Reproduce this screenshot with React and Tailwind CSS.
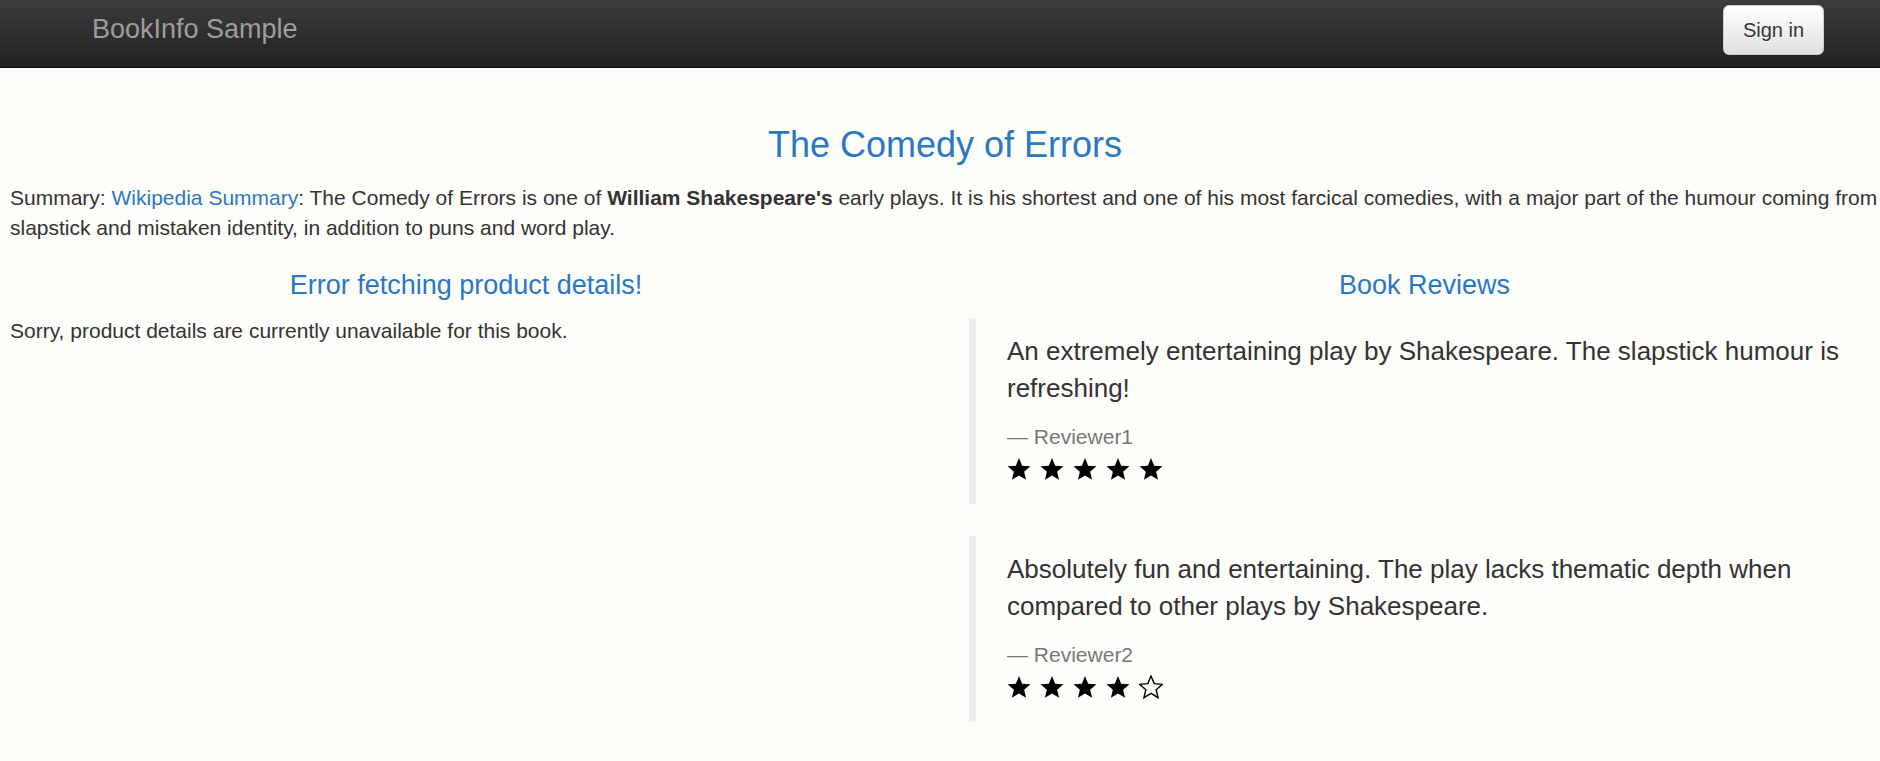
import React from 'react';

const reviews = [
    {
        text: 'An extremely entertaining play by Shakespeare. The slapstick humour is refreshing!',
        reviewer: 'Reviewer1',
        rating: 5
    },
    {
        text: 'Absolutely fun and entertaining. The play lacks thematic depth when compared to other plays by Shakespeare.',
        reviewer: 'Reviewer2',
        rating: 4
    }
];

const STAR = '12,1 15.17,8.63 23.41,9.29 17.14,14.67 19.05,22.71 12,18.4 4.95,22.71 6.86,14.67 0.59,9.29 8.83,8.63';

const Star = ({ filled }) => (
    <svg width="24" height="24" viewBox="0 0 24 24" className="block">
        {filled ? (
            <polygon points={STAR} fill="#000" />
        ) : (
            <polygon points={STAR} fill="none" stroke="#000" strokeWidth="1.4" strokeLinejoin="miter" />
        )}
    </svg>
);

const App = () => {
    return (
        <div className="min-h-screen bg-[#fdfdfa] font-['Liberation_Sans',Arial,sans-serif] text-[#333]">
            {/* Navbar */}
            <header className="h-[68px] bg-linear-to-b from-[#3c3c3c] to-[#222] border-b border-[#080808] flex items-center justify-between pl-[92px] pr-[56px] pb-[8px]">
                <span className="text-[27px] text-[#9d9d9d] leading-none">BookInfo Sample</span>
                <button className="w-[101px] h-[50px] rounded-[6px] border border-[#ccc] bg-linear-to-b from-white to-[#e0e0e0] text-[20px] text-[#333] [text-shadow:0_1px_0_#fff]">
                    Sign in
                </button>
            </header>

            {/* Main */}
            <main className="pl-[10px] pt-[57px]">
                <h3 className="text-center text-[36px] leading-[40px] text-[#2a78c4]">The Comedy of Errors</h3>
                <p className="mt-[18px] text-[21px] leading-[30px]">
                    Summary: <a className="text-[#2a78c4]">Wikipedia Summary</a>: The Comedy of Errors is one of{' '}
                    <b>William Shakespeare's</b> early plays. It is his shortest and one of his most farcical comedies, with a
                    major part of the humour coming from slapstick and mistaken identity, in addition to puns and word play.
                </p>

                <div className="mt-[27px] grid grid-cols-[912px_1fr] gap-x-[47px]">
                    {/* Details */}
                    <div>
                        <h4 className="text-center text-[27px] leading-[30px] text-[#2a78c4]">Error fetching product details!</h4>
                        <p className="mt-[16px] text-[21px] leading-[30px]">
                            Sorry, product details are currently unavailable for this book.
                        </p>
                    </div>

                    {/* Reviews */}
                    <div>
                        <h4 className="text-center text-[27px] leading-[30px] text-[#2a78c4]">Book Reviews</h4>
                        <div className="mt-[18px]">
                            {reviews.map((r) => (
                                <blockquote
                                    key={r.reviewer}
                                    className="border-l-[7px] border-[#eee] pl-[31px] pr-[20px] py-[15px] mb-[32px]"
                                >
                                    <p className="text-[26px] leading-[37px] mb-[15px]">{r.text}</p>
                                    <div className="text-[21px] leading-[30px] text-[#777]">— {r.reviewer}</div>
                                    <div className="h-[37px] flex items-center gap-[9px] pb-[4px]">
                                        {[1, 2, 3, 4, 5].map((i) => (
                                            <Star key={i} filled={i <= r.rating} />
                                        ))}
                                    </div>
                                </blockquote>
                            ))}
                        </div>
                    </div>
                </div>
            </main>
        </div>
    );
};

export default App;
